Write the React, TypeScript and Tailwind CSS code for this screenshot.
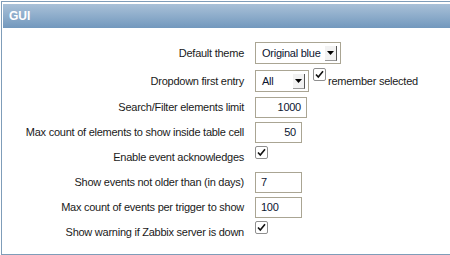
import type { ReactNode } from "react";

function Check() {
  return (
    <span className="inline-flex h-[13px] w-[13px] shrink-0 items-center justify-center rounded-[2px] border border-[#8f8f8f] bg-white">
      <svg width="11" height="11" viewBox="0 0 11 11">
        <path d="M2 5.5 L4.3 8 L9 2.2" fill="none" stroke="#111" strokeWidth="1.6" />
      </svg>
    </span>
  );
}

function Select({ value, width }: { value: string; width: string }) {
  return (
    <div className={`flex h-[22px] items-center justify-between border border-[#aaa593] bg-white pl-[6px] pr-[3px] ${width}`}>
      <span className="text-[#0c1530]">{value}</span>
      <span className="flex h-[15px] w-[12px] items-center justify-center border-r border-b border-r-[#555] border-b-[#999] bg-[#f2f2f2]">
        <svg width="7" height="4" viewBox="0 0 7 4">
          <path d="M0 0 H7 L3.5 4 Z" fill="#000" />
        </svg>
      </span>
    </div>
  );
}

function Field({ value, width, right }: { value: string; width: string; right?: boolean }) {
  return (
    <div className={`flex h-[21px] items-center border border-[#aaa593] bg-white px-[5px] text-[#0c1530] ${width} ${right ? "justify-end" : ""}`}>
      {value}
    </div>
  );
}

const rows: { label: string; control: ReactNode; tall?: boolean }[] = [
  { label: "Default theme", control: <Select value="Original blue" width="w-[86px]" />, tall: true },
  {
    label: "Dropdown first entry",
    tall: true,
    control: (
      <div className="flex items-center gap-[4px]">
        <Select value="All" width="w-[54px]" />
        <div className="flex items-start gap-[2px]">
          <span className="-mt-[5px]">
            <Check />
          </span>
          <span>remember selected</span>
        </div>
      </div>
    ),
  },
  { label: "Search/Filter elements limit", control: <Field value="1000" width="w-[52px]" right /> },
  { label: "Max count of elements to show inside table cell", control: <Field value="50" width="w-[47px]" right /> },
  { label: "Enable event acknowledges", control: <span className="-mt-[7px]"><Check /></span> },
  { label: "Show events not older than (in days)", control: <Field value="7" width="w-[47px]" /> },
  { label: "Max count of events per trigger to show", control: <Field value="100" width="w-[47px]" /> },
  { label: "Show warning if Zabbix server is down", control: <span className="-mt-[6px]"><Check /></span> },
];

export default function App() {
  return (
    <div className="h-[255px] w-[450px] overflow-hidden bg-white pl-[1px] pt-[1px] font-['Liberation_Sans',Arial,sans-serif] text-[11px] tracking-[-0.25px] text-[#1a1a1a]">
      <div className="h-[254px] w-[460px] border border-[#7f9db9] p-[1px] pt-[2px]">
        <div className="flex h-[24px] items-center bg-gradient-to-b from-[#a9c1d8] to-[#7298bd] pl-[6px] text-[12px] font-bold tracking-normal text-white">
          GUI
        </div>
        <div className="flex flex-col gap-[4px] pt-[13px]">
          {rows.map((r) => (
            <div
              key={r.label}
              className={`grid grid-cols-[241px_1fr] items-center gap-x-[11px] ${r.tall ? "h-[24px]" : "h-[21px]"}`}
            >
              <span className="text-right">{r.label}</span>
              <div className="flex items-center">{r.control}</div>
            </div>
          ))}
        </div>
      </div>
    </div>
  );
}
